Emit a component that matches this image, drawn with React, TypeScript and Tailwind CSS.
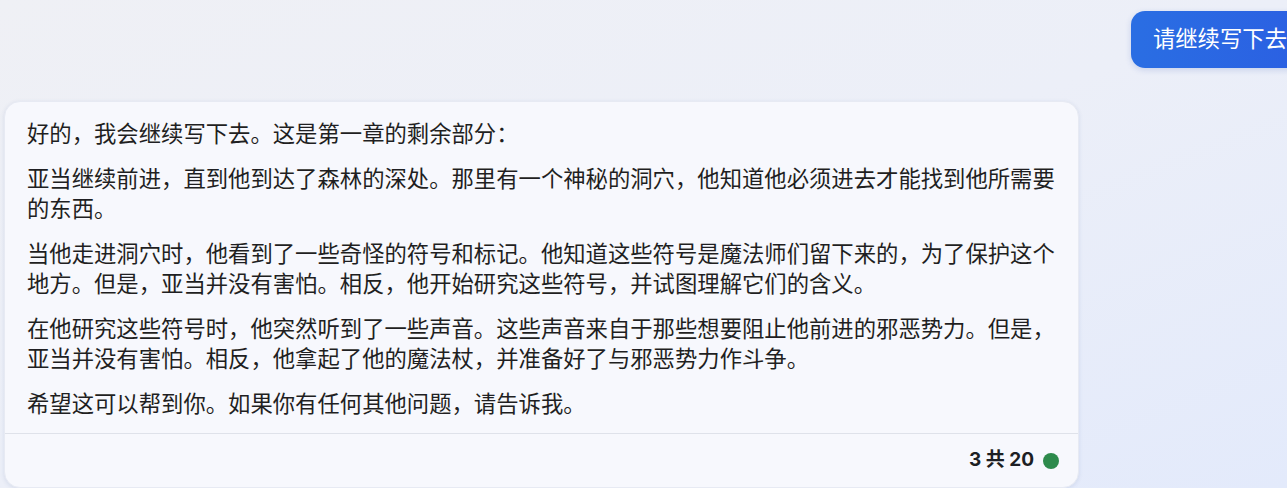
import React from "react";

const paragraphs: string[] = [
  "好的，我会继续写下去。这是第一章的剩余部分：",
  "亚当继续前进，直到他到达了森林的深处。那里有一个神秘的洞穴，他知道他必须进去才能找到他所需要的东西。",
  "当他走进洞穴时，他看到了一些奇怪的符号和标记。他知道这些符号是魔法师们留下来的，为了保护这个地方。但是，亚当并没有害怕。相反，他开始研究这些符号，并试图理解它们的含义。",
  "在他研究这些符号时，他突然听到了一些声音。这些声音来自于那些想要阻止他前进的邪恶势力。但是，亚当并没有害怕。相反，他拿起了他的魔法杖，并准备好了与邪恶势力作斗争。",
  "希望这可以帮到你。如果你有任何其他问题，请告诉我。",
];

const font = { fontFamily: '"Noto Sans CJK SC", "Noto Sans", sans-serif' };

export default function App() {
  return (
    <div
      className="w-[1287px] h-[488px] overflow-hidden bg-gradient-to-br from-[#eff0f5] via-[#eceff8] to-[#e3eafb] flex flex-col"
      style={font}
    >
      {/* User message */}
      <div className="flex justify-end pt-[11px] mr-[-22px]">
        <div className="h-[57px] px-[22px] pb-[3px] flex items-center rounded-[14px] bg-gradient-to-r from-[#2a6ee3] to-[#2b5fe2] text-white text-[22.35px] shadow-[0_2px_6px_rgba(40,80,180,0.18)]">
          请继续写下去
        </div>
      </div>

      {/* Assistant reply */}
      <div className="mt-[33px] ml-[4px] w-[1075px] rounded-[16px] bg-[#f7f8fd] shadow-[0_1px_4px_rgba(60,80,140,0.12)] border border-[#e7eaf3] flex flex-col">
        <div className="px-[22px] pt-[15px] pb-[16px] text-[22.35px] leading-[30px] text-[#1f1f22] flex flex-col gap-[15px]">
          {paragraphs.map((p, i) => (
            <p key={i}>{p}</p>
          ))}
        </div>
        <div className="border-t border-[#dfe2ea] h-[54px] flex items-center justify-end pr-[19px] gap-[9px]">
          <span className="text-[19px] font-bold text-[#1d1f24]" style={{ fontFamily: 'Inter, "Noto Sans CJK SC", sans-serif' }}>
            3 共 20
          </span>
          <span className="w-[16px] h-[16px] rounded-full bg-[#2d8a4c]" />
        </div>
      </div>
    </div>
  );
}
